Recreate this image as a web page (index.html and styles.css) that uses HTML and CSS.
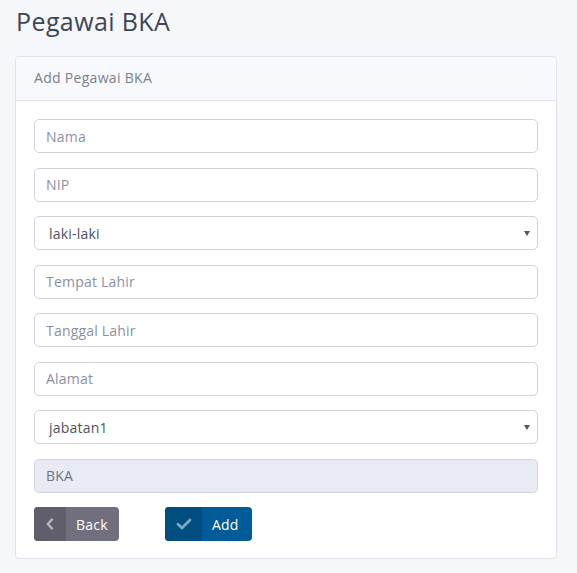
FILE: index.html
```html
<!DOCTYPE html>
<html>
<head>
<meta charset="utf-8">
<link rel="stylesheet" href="styles.css">
</head>
<body>
<h1 class="page-title">Pegawai BKA</h1>
<div class="card">
  <div class="card-header">Add Pegawai BKA</div>
  <div class="card-body">
    <input class="field" type="text" placeholder="Nama">
    <input class="field" type="text" placeholder="NIP">
    <div class="select-wrap">
      <select class="field select"><option>laki-laki</option><option>perempuan</option></select>
      <span class="caret"></span>
    </div>
    <input class="field" type="text" placeholder="Tempat Lahir">
    <input class="field" type="text" placeholder="Tanggal Lahir">
    <input class="field" type="text" placeholder="Alamat">
    <div class="select-wrap">
      <select class="field select"><option>jabatan1</option></select>
      <span class="caret"></span>
    </div>
    <input class="field disabled" type="text" value="BKA" disabled>
    <div class="actions">
      <button class="btn btn-back"><span class="btn-icon"><svg width="10" height="12" viewBox="0 0 10 12"><path d="M7 1.5 L2.8 6 L7 10.5" fill="none" stroke="#b9b8c2" stroke-width="2.4" stroke-linecap="round" stroke-linejoin="round"/></svg></span><span class="btn-label">Back</span></button>
      <button class="btn btn-add"><span class="btn-icon"><svg width="16" height="12" viewBox="0 0 16 12"><path d="M2 6.2 L6 10 L14 2" fill="none" stroke="#7ea7c4" stroke-width="2.8" stroke-linecap="round" stroke-linejoin="round"/></svg></span><span class="btn-label">Add</span></button>
    </div>
  </div>
</div>
</body>
</html>
```

FILE: styles.css
```css
html, body {
  margin: 0;
  padding: 0;
  background: #f6f7fb;
  font-family: "Open Sans", "Liberation Sans", sans-serif;
}
body {
  padding: 0 20px 0 15px;
}
.page-title {
  margin: 0;
  padding: 4px 0 0 1px;
  height: 56px;
  box-sizing: border-box;
  font-size: 25px;
  font-weight: 400;
  color: #3d4655;
  letter-spacing: 0.4px;
}
.card {
  width: 542px;
  box-sizing: border-box;
  border: 1px solid #e1e1ec;
  border-radius: 4px;
  background: #fff;
  overflow: hidden;
}
.card-header {
  height: 44px;
  box-sizing: border-box;
  padding: 11px 18px 0;
  background: #f8f9fd;
  border-bottom: 1px solid #e1e1ec;
  font-size: 14px;
  letter-spacing: 0.3px;
  color: #7b7f8b;
}
.card-body {
  padding: 18px 18px 17px;
  display: flex;
  flex-direction: column;
  gap: 14.5px;
}
.field {
  display: block;
  width: 504px;
  height: 34px;
  box-sizing: border-box;
  border: 1px solid #d2d0e2;
  border-radius: 5px;
  padding: 0 11px;
  font-family: inherit;
  font-size: 14px;
  letter-spacing: 0.2px;
  color: #555866;
  background: #fff;
  outline: none;
  margin: 0;
}
.field::placeholder {
  color: #8b90a6;
}
.field.disabled {
  background: #e8ebf3;
  color: #6e7282;
}
.select-wrap {
  position: relative;
}
.select {
  appearance: none;
  -webkit-appearance: none;
  padding-left: 14px;
  color: #4f5262;
}
.caret {
  position: absolute;
  right: 8px;
  top: 15px;
  width: 0;
  height: 0;
  border-left: 3px solid transparent;
  border-right: 3px solid transparent;
  border-top: 5px solid #555;
}
.actions {
  display: flex;
  gap: 46px;
  margin-top: 0;
}
.btn {
  display: flex;
  padding: 0;
  border: none;
  border-radius: 4px;
  overflow: hidden;
  height: 34px;
  font-family: inherit;
  font-size: 14px;
  letter-spacing: 0.2px;
  color: #fff;
  cursor: pointer;
}
.btn-icon {
  display: flex;
  align-items: center;
  justify-content: center;
  height: 100%;
}
.btn-label {
  display: flex;
  align-items: center;
  height: 100%;
  padding: 0 0 0 10px;
}
.btn-back {
  width: 85px;
  background: #716f7d;
}
.btn-back .btn-icon {
  width: 32px;
  background: #5f5e6a;
}
.btn-add {
  width: 87px;
  background: #005b96;
}
.btn-add .btn-icon {
  width: 37px;
  background: #004e7f;
}
```
